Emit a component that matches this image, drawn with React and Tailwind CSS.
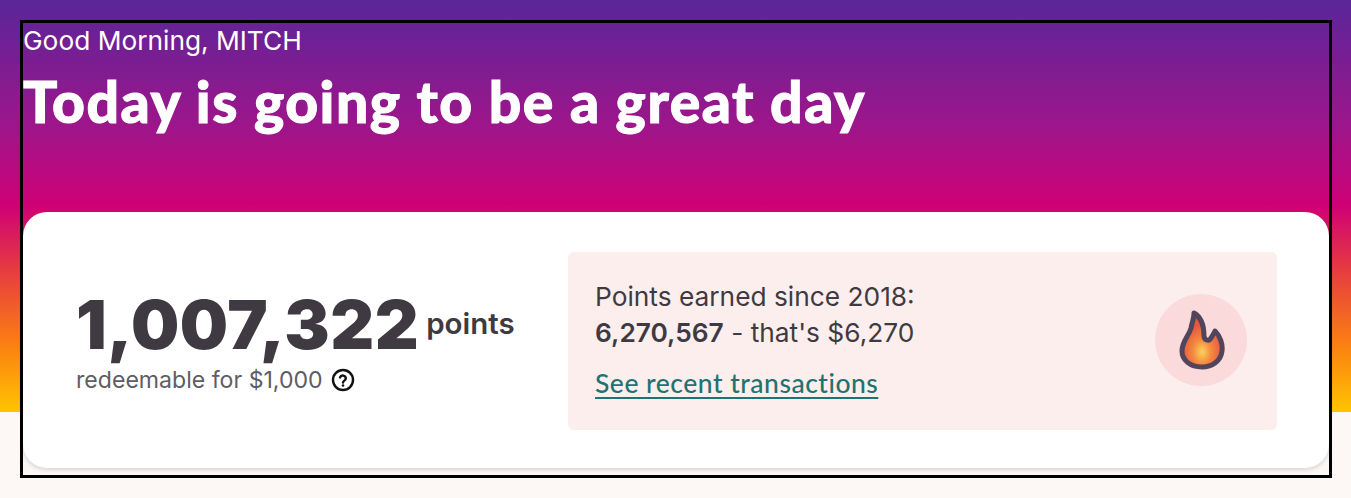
const inter = 'font-["Inter","Liberation_Sans",sans-serif]';

function Flame() {
	return (
		<svg viewBox="0 0 48 64" className="w-[48px] h-[64px]">
			<defs>
				<radialGradient id="flame" cx="50%" cy="72%" r="50%">
					<stop offset="0%" stopColor="#fbd25a" />
					<stop offset="45%" stopColor="#f58a40" />
					<stop offset="100%" stopColor="#e5583f" />
				</radialGradient>
			</defs>
			<path
				d="M17 5 C24 9 27 18 27 28 C27 32 32 34 34 30 C36 27 37 25 38 23 C43 28 46 36 45 43 C44 53 35 59 25 59 C13 59 5 52 5 43 C5 33 12 28 14 20 C15 15 17 10 17 5 Z"
				fill="url(#flame)"
				stroke="#51455c"
				strokeWidth="5"
				strokeLinejoin="round"
			/>
		</svg>
	);
}

function HelpIcon() {
	return (
		<svg viewBox="0 0 24 24" className="w-[24px] h-[24px] ml-[8px]" fill="none">
			<circle cx="12" cy="12" r="10" stroke="#111" strokeWidth="2.400" />
			<path d="M9 9.500a3 3 0 0 1 5.800 1c0 2-2.800 2.200-2.800 4" stroke="#111" strokeWidth="2.400" strokeLinecap="round" />
			<circle cx="12" cy="17.500" r="1.300" fill="#111" />
		</svg>
	);
}

export default function App() {
	return (
		<div className={`w-[1351px] h-[498px] overflow-hidden bg-[#fdf7f6] ${inter}`}>
			{/* gradient stops at 412, the outlined box runs past it */}
			<div className="bg-[linear-gradient(180deg,#5a2599_0px,#a0158a_130px,#cf0076_205px,#e8403c_275px,#fb8012_345px,#ffc400_412px)] pt-[20px] pl-[20px] pr-[19px] h-[412px]">
				<div className="h-[458px] border-[3px] border-black flex flex-col">
					<div className="text-white text-[26.300px] leading-[30px] pt-[3px]">Good Morning, MITCH</div>
					<h1 className='text-white text-[57px] leading-[60px] mt-[15px] font-black tracking-[1.500px] [-webkit-text-stroke:1px_white] font-["Lato",sans-serif]'>
						Today is going to be a great day
					</h1>
					<div className="mt-[81px] h-[256px] bg-white rounded-[24px] shadow-[0_2px_4px_rgba(0,0,0,0.15)] flex items-center pl-[53px] pr-[52px]">
						<div className="w-[492px] mt-[5px]">
							<div className="flex items-start text-[#3f3a42]">
								<span className="text-[68px] leading-[72px] font-black tracking-[0.5px]">1,007,322</span>
								<span className="text-[29.500px] leading-[36px] font-semibold ml-[7px] mt-[17px]">points</span>
							</div>
							<div className="flex items-center text-[23.100px] text-[#5f5c63] mt-[3px]">
								redeemable for $1,000
								<HelpIcon />
							</div>
						</div>
						<div className="flex-1 h-[178px] mt-[2px] bg-[#fdeeee] rounded-[6px] flex items-center justify-between pl-[27px] pr-[30px]">
							<div className="text-[26.300px] leading-[36px] text-[#3f3a42] -mt-[3px]">
								<div>Points earned since 2018:</div>
								<div>
									<span className="font-semibold">6,270,567</span> - that's $6,270
								</div>
								<a className='block mt-[14px] w-fit text-[26.500px] font-medium tracking-[0.5px] text-[#1f7370] underline underline-offset-[4px] font-["Lato",sans-serif]'>
									See recent transactions
								</a>
							</div>
							<div className="w-[92px] h-[92px] -mt-[2px] rounded-full bg-[#fadada] flex items-center justify-center">
								<Flame />
							</div>
						</div>
					</div>
				</div>
			</div>
		</div>
	);
}
